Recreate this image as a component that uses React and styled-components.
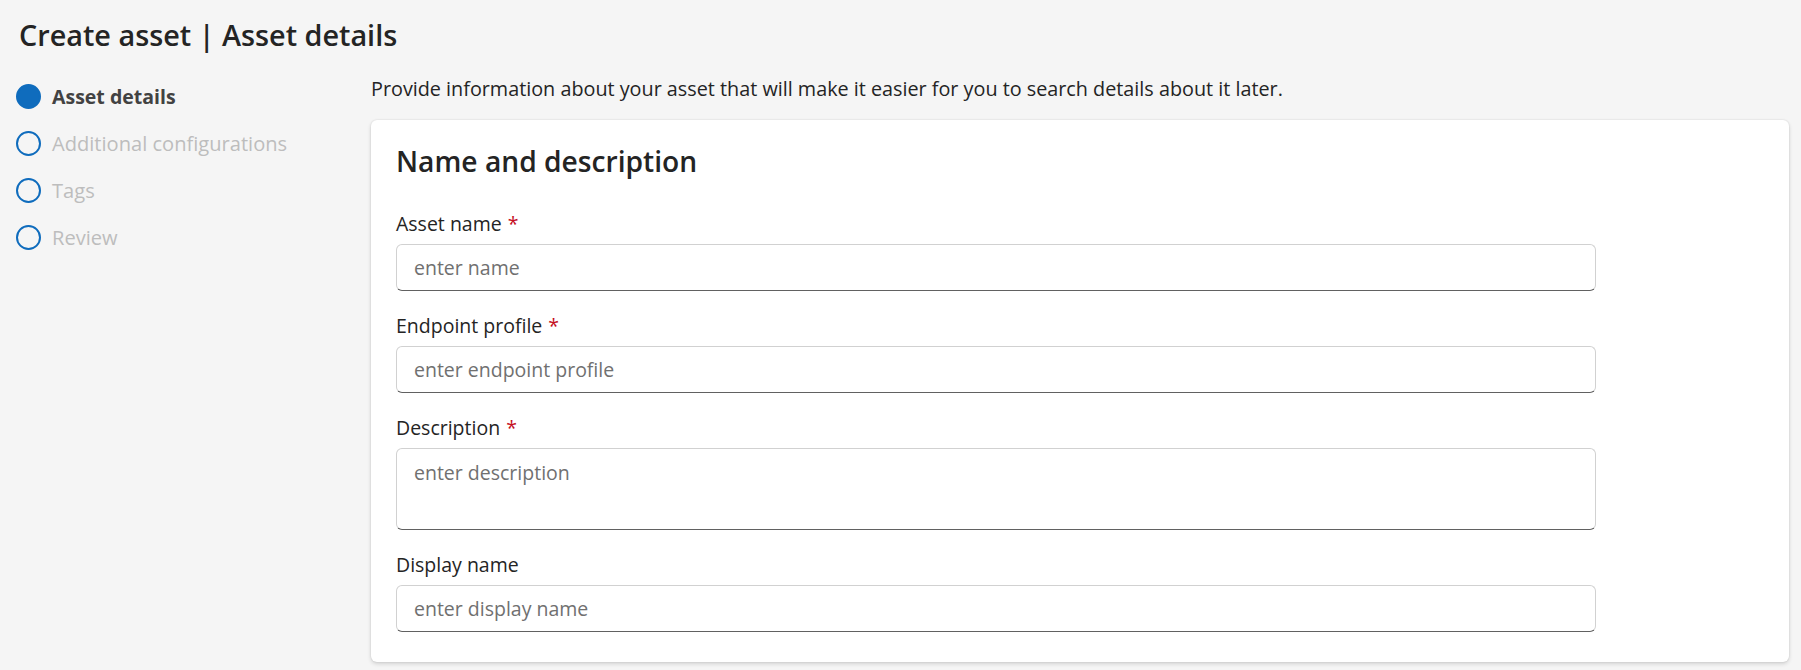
import styled, { createGlobalStyle } from 'styled-components';

const GlobalStyle = createGlobalStyle`
  html,
  body {
    margin: 0;
    background: #f5f5f5;
  }

  body {
    font-family: 'Open Sans', 'Noto Sans', sans-serif;
    color: #242424;
  }

  * {
    box-sizing: border-box;
  }
`;

const Page = styled.div`
  min-height: 670px;
  padding: 15px 12px 0 16px;
`;

const Title = styled.h1`
  margin: 0 0 18px;
  padding-left: 3px;
  font-size: 28.8px;
  line-height: 40px;
  font-weight: 600;
  color: #242424;
`;

const Body = styled.div`
  display: grid;
  grid-template-columns: 355px 1fr;
  align-items: start;
`;

const Steps = styled.ol`
  list-style: none;
  margin: 0;
  padding: 0;
`;

const Step = styled.li`
  height: 47px;
  display: flex;
  align-items: center;
  gap: 11px;
  font-size: ${(props) => (props.$active ? '19.5px' : '20.1px')};
  font-weight: ${(props) => (props.$active ? 700 : 400)};
  color: ${(props) => (props.$active ? '#424242' : '#bdbdbd')};
`;

const StepDot = styled.span`
  width: 25px;
  height: 25px;
  flex: none;
  border-radius: 50%;
  border: 2px solid #0f6cbd;
  background: ${(props) => (props.$active ? '#0f6cbd' : 'transparent')};
`;

const Main = styled.div`
  display: flex;
  flex-direction: column;
  gap: 17px;
  padding-top: 2px;
`;

const Intro = styled.p`
  margin: 0;
  font-size: 19.8px;
  line-height: 28px;
`;

const Card = styled.section`
  background: #ffffff;
  border-radius: 6px;
  box-shadow:
    0 0 2px rgba(0, 0, 0, 0.12),
    0 2px 4px rgba(0, 0, 0, 0.14);
  padding: 21px 25px 30px;
`;

const CardTitle = styled.h2`
  margin: 0 0 29px;
  font-size: 28.2px;
  line-height: 40px;
  font-weight: 600;
`;

const Form = styled.div`
  display: flex;
  flex-direction: column;
  gap: 21px;
  max-width: 1200px;
`;

const Field = styled.div`
  display: flex;
  flex-direction: column;
  gap: 6px;
`;

const Label = styled.label`
  font-size: 19.5px;
  line-height: 28px;
  color: #242424;
`;

const Required = styled.span`
  color: #c50f1f;
  padding-left: 6px;
`;

const inputBase = `
  width: 100%;
  border: 1px solid #d1d1d1;
  border-bottom-color: #616161;
  border-radius: 6px;
  background: #ffffff;
  font-family: 'Open Sans', 'Noto Sans', sans-serif;
  font-size: 19.5px;
  line-height: 28px;
  color: #242424;
  padding: 0 17px;
  outline: none;

  &::placeholder {
    color: #707070;
    opacity: 1;
  }
`;

const TextInput = styled.input`
  ${inputBase}
  height: 47px;
`;

const TextArea = styled.textarea`
  ${inputBase}
  height: 82px;
  padding-top: 10px;
  resize: none;
`;

const steps = [
  'Asset details',
  'Additional configurations',
  'Tags',
  'Review',
];

const fields = [
  { id: 'name', label: 'Asset name', placeholder: 'enter name', required: true },
  {
    id: 'profile',
    label: 'Endpoint profile',
    placeholder: 'enter endpoint profile',
    required: true,
  },
  {
    id: 'description',
    label: 'Description',
    placeholder: 'enter description',
    required: true,
    multiline: true,
  },
  { id: 'display', label: 'Display name', placeholder: 'enter display name' },
];

export default function App() {
  return (
    <>
      <GlobalStyle />
      <Page>
        <Title>Create asset | Asset details</Title>
        <Body>
          <Steps>
            {steps.map((step, index) => (
              <Step key={step} $active={index === 0}>
                <StepDot $active={index === 0} />
                {step}
              </Step>
            ))}
          </Steps>

          <Main>
            <Intro>
              Provide information about your asset that will make it easier for
              you to search details about it later.
            </Intro>
            <Card>
              <CardTitle>Name and description</CardTitle>
              <Form>
                {fields.map((field) => (
                  <Field key={field.id}>
                    <Label htmlFor={field.id}>
                      {field.label}
                      {field.required && <Required>*</Required>}
                    </Label>
                    {field.multiline ? (
                      <TextArea id={field.id} placeholder={field.placeholder} />
                    ) : (
                      <TextInput id={field.id} placeholder={field.placeholder} />
                    )}
                  </Field>
                ))}
              </Form>
            </Card>
          </Main>
        </Body>
      </Page>
    </>
  );
}
